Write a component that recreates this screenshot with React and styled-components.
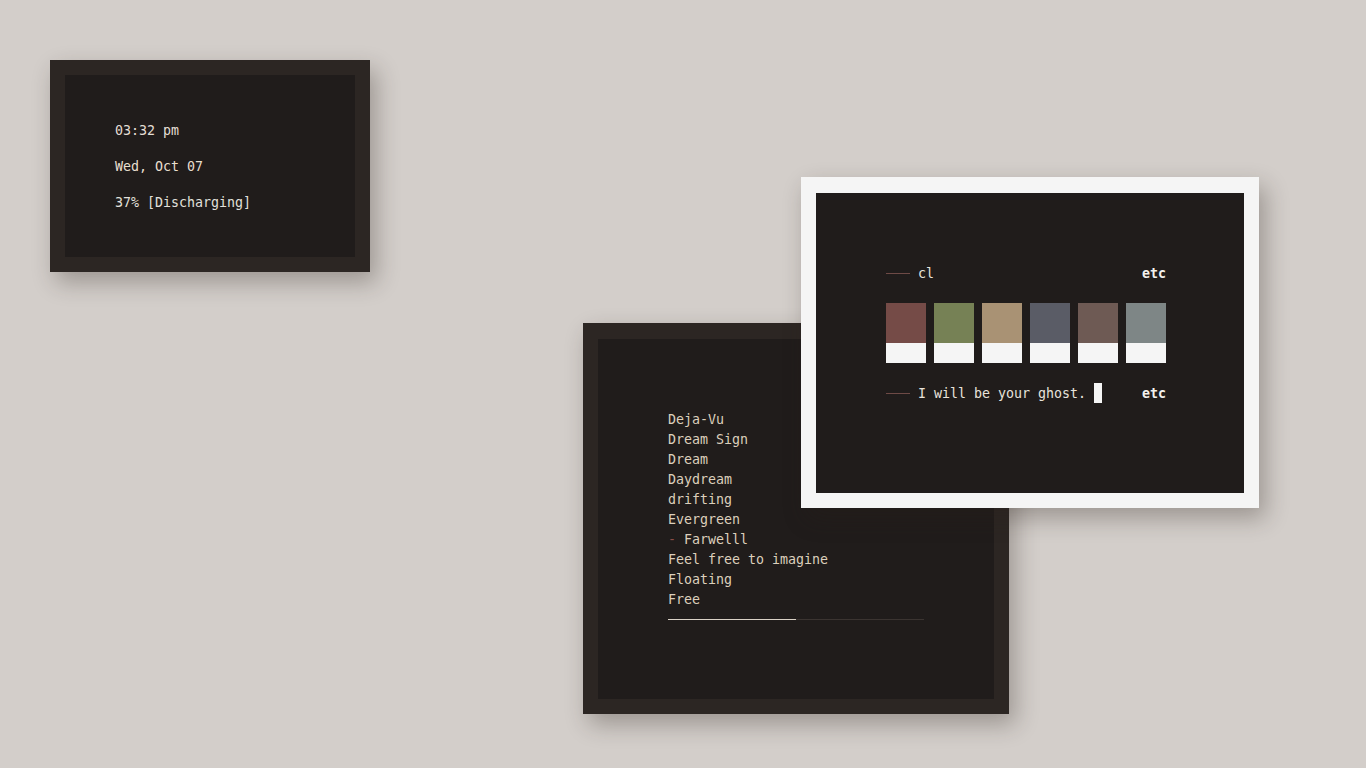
import React from "react";
import styled, { createGlobalStyle } from "styled-components";

const GlobalStyle = createGlobalStyle`
  html, body {
    margin: 0;
    padding: 0;
    background: #d3ceca;
  }
  body {
    font-family: "DejaVu Sans Mono", "Liberation Mono", monospace;
    -webkit-font-smoothing: antialiased;
  }
`;

const Desktop = styled.div`
  position: relative;
  width: 1366px;
  height: 768px;
  overflow: hidden;
  background: #d3ceca;
`;

const Window = styled.div`
  position: absolute;
  left: ${(p) => p.x}px;
  top: ${(p) => p.y}px;
  width: ${(p) => p.w}px;
  height: ${(p) => p.h}px;
  box-sizing: border-box;
  border: 15px solid ${(p) => p.frame};
  border-top-width: ${(p) => p.topBorder || 15}px;
  background: #201c1b;
  box-shadow: 6px 10px 22px rgba(40, 30, 25, 0.32);
  z-index: ${(p) => p.z || 1};
  display: flex;
  flex-direction: column;
  padding: ${(p) => p.pad};
  color: #e4ded5;
  font-size: 13.3px;
  line-height: 20px;
`;

const Line = styled.div`
  color: ${(p) => p.tone || "#e4ded5"};
  white-space: pre;
`;

const InfoStack = styled.div`
  display: flex;
  flex-direction: column;
  gap: 16px;
`;

const List = styled.div`
  display: flex;
  flex-direction: column;
  width: 256px;
`;

const Track = styled.div`
  margin-top: 9px;
  height: 1px;
  width: 256px;
  background: #3b3431;
  display: flex;
`;

const Fill = styled.div`
  height: 1px;
  background: #d9d1c6;
`;

const Dash = styled.span`
  color: #8a4d47;
  margin-right: 8px;
`;

const Palette = styled.div`
  display: flex;
  flex-direction: column;
  width: 280px;
  gap: 20px;
`;

const Row = styled.div`
  display: flex;
  align-items: center;
  height: 20px;
`;

const Rule = styled.span`
  width: 24px;
  height: 1px;
  background: #6e4a46;
  margin-right: 8px;
`;

const Label = styled.span`
  color: #e8e3dc;
  white-space: pre;
  padding-top: 2px;
`;

const Etc = styled.span`
  margin-left: auto;
  font-weight: bold;
  color: #f3f1ee;
  padding-top: 2px;
`;

const Cursor = styled.span`
  display: inline-block;
  width: 8px;
  height: 20px;
  background: #f5f5f5;
`;

const Swatches = styled.div`
  display: flex;
  gap: 8px;
`;

const Swatch = styled.div`
  width: 40px;
  height: 60px;
  display: flex;
  flex-direction: column;
  &::before {
    content: "";
    height: 40px;
    background: ${(p) => p.color};
  }
  &::after {
    content: "";
    height: 20px;
    background: #f5f5f5;
  }
`;

const songs = [
  "Deja-Vu",
  "Dream Sign",
  "Dream",
  "Daydream",
  "drifting",
  "Evergreen",
  null,
  "Feel free to imagine",
  "Floating",
  "Free",
];

const colors = ["#754b47", "#768155", "#a99274", "#5a5c66", "#6e5a54", "#7e8686"];

export default function App() {
  return (
    <>
      <GlobalStyle />
      <Desktop>
        <Window x={50} y={60} w={320} h={212} frame="#2c2623" pad="46px 0 0 50px">
          <InfoStack>
            <Line>03:32 pm</Line>
            <Line tone="#e9dfcf">Wed, Oct 07</Line>
            <Line tone="#e2e0dc">37% [Discharging]</Line>
          </InfoStack>
        </Window>

        <Window x={583} y={323} w={426} h={391} frame="#2c2623" topBorder={16} pad="71px 0 0 70px">
          <List>
            {songs.map((s, i) =>
              s ? (
                <Line key={i} tone="#dccfbc">
                  {s}
                </Line>
              ) : (
                <Line key={i} tone="#dccfbc">
                  <Dash>-</Dash>Farwelll
                </Line>
              )
            )}
          </List>
          <Track>
            <Fill style={{ width: "50%" }} />
          </Track>
        </Window>

        <Window x={801} y={177} w={458} h={331} frame="#f5f5f5" topBorder={16} pad="70px 0 0 70px" z={2}>
          <Palette>
            <Row>
              <Rule />
              <Label>cl</Label>
              <Etc>etc</Etc>
            </Row>
            <Swatches>
              {colors.map((c) => (
                <Swatch key={c} color={c} />
              ))}
            </Swatches>
            <Row>
              <Rule />
              <Label>I will be your ghost. </Label>
              <Cursor />
              <Etc>etc</Etc>
            </Row>
          </Palette>
        </Window>
      </Desktop>
    </>
  );
}
